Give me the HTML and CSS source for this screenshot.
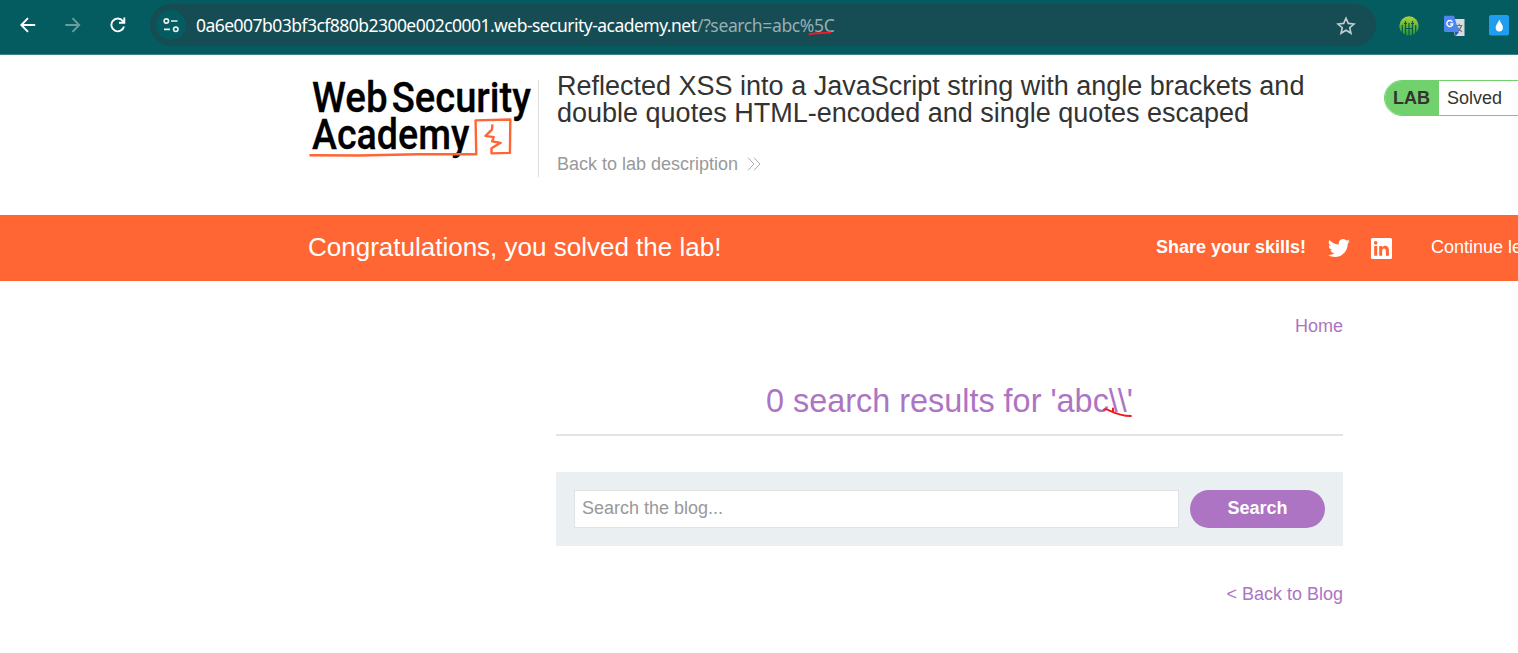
FILE: index.html
```html
<!DOCTYPE html>
<html lang="en">
<head>
<meta charset="utf-8">
<title>Web Security Academy</title>
<link rel="stylesheet" href="styles.css">
</head>
<body>
<div class="toolbar">
  <div class="nav">
    <svg width="16" height="16" viewBox="0 0 16 16" class="ic"><path d="M15.2 8H1.6M8 1.2 1.3 8 8 14.8"/></svg>
    <svg width="16" height="16" viewBox="0 0 16 16" class="ic dim"><path d="M.3 8h13.600M7.500 1.200 14.200 8 7.500 14.800"/></svg>
    <svg width="16" height="16" viewBox="0 0 16 16" class="ic"><path d="M14 9.500A6.400 6.400 0 1 1 12.800 3.900L14 5.300M14.300 .5V5.700H9"/></svg>
  </div>
  <div class="omnibox">
    <span class="site"><svg width="18" height="16" viewBox="0 0 18 16" class="tune"><circle cx="4.300" cy="4" r="2.200"/><path d="M9 4h6.500M2 12.300h6"/><circle cx="13.800" cy="12.300" r="2.200"/></svg></span>
    <div class="url"><span class="host">0a6e007b03bf3cf880b2300e002c0001.web-security-academy.net</span><span class="path">/?search=abc%5C</span>
      <svg class="mark-url" width="26" height="6" viewBox="0 0 26 6"><path d="M1.500 4.300C6 2.600 14 3.200 22.300 2.500"/></svg>
    </div>
    <svg class="star" width="20" height="20" viewBox="0 0 20 20"><path d="M10 2.200 12.300 7.400 18 8 13.700 11.700 15 17.300 10 14.300 5 17.300 6.300 11.700 2 8 7.700 7.400Z"/></svg>
  </div>
  <div class="exts">
    <svg width="20" height="20" viewBox="0 0 20 20"><defs><linearGradient id="g" x2="0" y2="1"><stop stop-color="#b3d334"/><stop offset="1" stop-color="#179447"/></linearGradient></defs><circle cx="10" cy="10" r="9.700" fill="url(#g)"/><path d="M6.500 5v15M10 7v13M13.500 5v15M3.300 9v9M16.700 9v9M5 7.500h3M12 7.500h3M6.500 12.500h7" stroke="#075a4a" stroke-width="1.200"/></svg>
    <svg width="22" height="22" viewBox="0 0 22 22"><path d="M8 4h13.500v17H12z" fill="#d8dde0"/><path d="M13 10.500h6.500M16.200 8.800v1.700M18.500 10.500c-.8 3-2.500 5-5 6.500M14 11.500c1 2.500 2.500 4 5 5.200" stroke="#68777f" stroke-width="1.100" fill="none"/><path d="M11.500 17H16l-3.500 4.200z" fill="#3056a8"/><path d="M1.500.8H11L16 17H2.500Q1 17 1 15.500V2Q1 .8 2 .8z" fill="#4d86ee"/><path d="M9.300 6.800A3 3 0 1 0 9.800 9H7.200" fill="none" stroke="#fff" stroke-width="1.400"/></svg>
    <svg width="20" height="21" viewBox="0 0 20 21"><rect width="20" height="20.500" rx="1.800" fill="#1f9df1"/><path d="M10.300 4.200C9.500 7.500 6.700 9.300 6.700 12.800a3.600 3.600 0 0 0 7.200 0C13.900 9.300 11 7.500 10.300 4.200z" fill="#fff"/></svg>
  </div>
</div>
<header class="header">
  <svg class="logo" width="230" height="97" viewBox="0 0 230 97">
    <text x="3" y="32" textLength="76" lengthAdjust="spacingAndGlyphs">Web</text>
    <text x="83" y="32" textLength="140" lengthAdjust="spacingAndGlyphs">Security</text>
    <text x="3" y="69" textLength="158" lengthAdjust="spacingAndGlyphs">Academy</text>
    <path class="orange" d="M.5 75.400 50 75.600 110 74.300 168 74.300 167.300 40.300 202.200 39.500 201.800 73 183.300 73.500V68.300L192.500 62.900 184 61.500 185.500 57.200 177.300 55.900 183.700 49.700 184.300 44.300"/>
  </svg>
  <div class="intro">
    <h2>Reflected XSS into a JavaScript string with angle brackets and<br>double quotes HTML-encoded and single quotes escaped</h2>
    <a class="back">Back to lab description<svg width="14" height="14" viewBox="0 0 14 14"><path d="M1 .7 7 7l-6 6.300M7 .7 13 7l-6 6.300"/></svg></a>
  </div>
  <div class="lab"><b>LAB</b><span>Solved</span></div>
</header>
<section class="banner">
  <h3>Congratulations, you solved the lab!</h3>
  <div class="share"><b>Share your skills!</b>
    <svg width="22" height="22" viewBox="0 0 24 24"><path d="M23.950 4.570a10 10 0 0 1-2.820.770 4.960 4.960 0 0 0 2.160-2.720 9.900 9.900 0 0 1-3.120 1.190 4.920 4.920 0 0 0-8.380 4.480C7.690 8.100 4.070 6.130 1.640 3.160a4.920 4.920 0 0 0 1.520 6.570 4.900 4.900 0 0 1-2.230-.610v.060a4.920 4.920 0 0 0 3.950 4.830 5 5 0 0 1-2.210.080 4.940 4.940 0 0 0 4.600 3.420A9.870 9.870 0 0 1 0 19.540a13.990 13.990 0 0 0 7.550 2.210c9.050 0 14-7.500 14-13.980 0-.210 0-.420-.020-.630a9.940 9.940 0 0 0 2.460-2.550z"/></svg>
    <svg width="21" height="21" viewBox="0 0 21 21"><path fill-rule="evenodd" d="M1.500 0h18Q21 0 21 1.500v18q0 1.500-1.500 1.500h-18Q0 21 0 19.500v-18Q0 0 1.500 0zM3.200 8v9.800h3V8zM4.700 3.100a1.800 1.800 0 1 0 0 3.600 1.800 1.800 0 0 0 0-3.600zM8.200 8v9.800h3v-5c0-3.200 3.700-3.200 3.700 0v5h3V12c0-5-5-5.200-6.700-2.600V8z"/></svg>
    <span>Continue learning</span>
  </div>
</section>
<main class="content">
  <a class="home">Home</a>
  <div class="result"><h1>0 search results for 'abc\\'<svg class="mark-result" width="32" height="12" viewBox="0 0 32 12"><path d="M2 2.600Q3 1.500 7 3.300 19 9 28.800 9M11 1.500v3"/></svg></h1></div>
  <form class="search"><input type="text" placeholder="Search the blog..."><button type="button">Search</button></form>
  <a class="blog">&lt; Back to Blog</a>
</main>
</body>
</html>
```
FILE: styles.css
```css
* { box-sizing: border-box; }
body { margin: 0; width: 1518px; height: 653px; overflow: hidden; background: #fff; color: #333332; font: 18px/20px "Liberation Sans", Arial, sans-serif; }
h1, h2, h3 { margin: 0; font-weight: 400; }
svg { flex: none; }

.toolbar { display: flex; height: 55px; padding-top: 4px; background: #045b60; border-bottom: 1px solid #3b8185; }
.nav { display: flex; gap: 29px; height: 42px; align-items: center; padding-left: 20px; width: 150px; }
.ic { fill: none; stroke: #fff; stroke-width: 1.900; }
.dim { stroke: #6b9da0; }
.omnibox { display: flex; align-items: center; width: 1226px; height: 42px; padding-left: 6px; border-radius: 21px; background: #164c54; }
.site { display: flex; align-items: center; justify-content: center; width: 30px; height: 30px; border-radius: 50%; background: #045b60; }
.tune { fill: none; stroke: #e5f0f0; stroke-width: 1.700; }
.url { position: relative; display: flex; margin-left: 10px; width: 1140px; font: 17.500px/24px "Noto Sans", sans-serif; white-space: nowrap; }
.host { width: 501px; color: #fff; letter-spacing: -0.530px; }
.path { color: #98afb2; letter-spacing: -0.370px; }
.mark-url { position: absolute; left: 612px; top: 17px; }
.mark-url path, .mark-result path { fill: none; stroke: #ed1c24; stroke-width: 2; stroke-linecap: round; }
.star { margin-top: 1px; fill: none; stroke: #c3cfd1; stroke-width: 1.600; }
.exts { display: flex; align-items: center; gap: 24px; height: 43px; padding-left: 23px; }

.header { display: flex; height: 160px; padding: 25px 0 0 309px; }
.logo { flex: none; overflow: visible; border-right: 1px solid #dedede; }
.logo text { font: 500 42px Roboto, sans-serif; fill: #000; stroke: #000; stroke-width: 0.300; }
.orange { fill: none; stroke: #ff6633; stroke-width: 2.400; stroke-linejoin: round; }
.intro { flex: none; width: 827px; padding-left: 18px; margin-top: -7px; }
.intro h2 { font-size: 27px; line-height: 27px; white-space: nowrap; }
.back { display: flex; align-items: center; gap: 9px; margin-top: 27px; color: #999; }
.back svg { fill: none; stroke: #aaa; stroke-width: 1; }
.lab { display: flex; width: 200px; height: 36px; margin-left: 18px; flex: none; line-height: 34px; border: 1px solid #70d16d; border-radius: 18px; overflow: hidden; }
.lab b { width: 54px; padding-left: 8px; background: #70d16d; }
.lab span { padding-left: 8px; }

.banner { display: flex; align-items: center; height: 66px; padding-left: 308px; background: #ff6633; color: #fff; white-space: nowrap; }
.banner h3 { flex: none; width: 848px; padding-bottom: 2px; font-size: 26px; line-height: 30px; }
.share { display: flex; flex: none; align-items: center; }
.share b { width: 172px; padding-bottom: 2px; }
.share svg { fill: #fff; margin-right: 21px; }
.share span { margin-left: 18px; padding-bottom: 2px; }

.content { display: flex; flex-direction: column; width: 787px; margin-left: 556px; padding-top: 35px; color: #ad74c3; }
.home, .blog { align-self: flex-end; }
.result { display: flex; justify-content: center; height: 64px; margin-top: 36px; padding-top: 11px; border-bottom: 2px solid #e3e3e3; }
h1 { position: relative; font-size: 32.400px; line-height: 36px; }
.mark-result { position: absolute; left: 336px; top: 24px; }
.search { display: flex; gap: 11px; height: 74px; margin-top: 36px; padding: 18px; background: #eaeff2; }
.search input { width: 605px; height: 38px; padding: 0 7px 2px; border: 1px solid #e0e3e3; background: #fff; font: inherit; outline: 0; }
.search input::placeholder { color: #999; opacity: 1; }
.search button { width: 135px; height: 38px; padding: 0 0 2px; border: 0; border-radius: 19px; background: #ad74c3; color: #fff; font: bold 18px "Liberation Sans", Arial, sans-serif; }
.blog { margin-top: 38px; }
```
